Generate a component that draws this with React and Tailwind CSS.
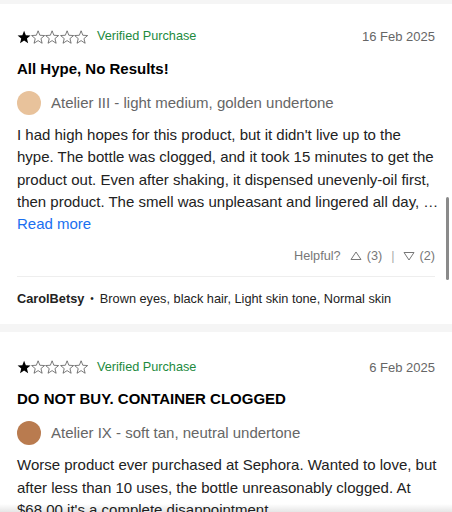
import React from "react";

const reviews = [
  {
    rating: 1,
    date: "16 Feb 2025",
    title: "All Hype, No Results!",
    swatch: "#e8c29b",
    shade: "Atelier III - light medium, golden undertone",
    body: [
      "I had high hopes for this product, but it didn't live up to the",
      "hype. The bottle was clogged, and it took 15 minutes to get the",
      "product out. Even after shaking, it dispensed unevenly-oil first,",
      "then product. The smell was unpleasant and lingered all day, \u2026",
    ],
    readMore: true,
    up: 3,
    down: 2,
    user: "CarolBetsy",
    traits: "Brown eyes, black hair, Light skin tone, Normal skin",
  },
  {
    rating: 1,
    date: "6 Feb 2025",
    title: "DO NOT BUY. CONTAINER CLOGGED",
    swatch: "#b97b4f",
    shade: "Atelier IX - soft tan, neutral undertone",
    body: [
      "Worse product ever purchased at Sephora. Wanted to love, but",
      "after less than 10 uses, the bottle unreasonably clogged. At",
      "$68.00 it's a complete disappointment.",
    ],
  },
];

const STAR = "M7 0.8l1.75 4.45 4.75 0.3-3.65 3.05 1.2 4.65L7 10.6l-4.05 2.65 1.2-4.65L0.5 5.55l4.75-0.3z";

const Stars = ({ rating }) => (
  <span className="flex">
    {[0, 1, 2, 3, 4].map((i) => (
      <svg key={i} width="14.2" height="14" viewBox="0 0 14 14">
        {i < rating ? (
          <path d={STAR} fill="#000" />
        ) : (
          <path d={STAR} fill="none" stroke="#444" strokeWidth="0.7" />
        )}
      </svg>
    ))}
  </span>
);

const Tri = ({ down }) => (
  <svg width="12" height="10" viewBox="0 0 12 10" className="text-[#777]">
    {down ? (
      <path d="M1 1.5h10L6 9z" fill="none" stroke="currentColor" strokeWidth="1" />
    ) : (
      <path d="M1 8.5h10L6 1z" fill="none" stroke="currentColor" strokeWidth="1" />
    )}
  </svg>
);

const ReviewCard = ({ r, top }) => (
  <div className={`bg-white px-[17px] ${top} pb-4`}>
    <div className="flex items-center justify-between h-[18px]">
      <div className="flex items-center gap-[9px]">
        <Stars rating={r.rating} />
        <span className="text-[12.7px] text-[#1d8a3e]">Verified Purchase</span>
      </div>
      <span className="text-[13px] text-[#666]">{r.date}</span>
    </div>
    <h3 className="mt-3 text-[15px] leading-[22px] font-bold text-black">{r.title}</h3>
    <div className="mt-[11px] flex items-center gap-[10px] h-6">
      <span className="w-6 h-6 rounded-full" style={{ background: r.swatch }} />
      <span className="text-[15px] text-[#666]">{r.shade}</span>
    </div>
    <div className="mt-[9px] text-[15px] leading-[22.3px] text-[#222]">
      {r.body.map((l, i) => (
        <div key={i} className="whitespace-nowrap">{l}</div>
      ))}
      {r.readMore && <div className="text-[#1a6ff0]">Read more</div>}
    </div>
    {r.user && (
      <>
        <div className="mt-3 flex items-center justify-end text-[12.7px] leading-[18px] text-[#777]">
          <span className="mr-[9px]">Helpful?</span>
          <Tri />
          <span className="ml-[5px]">({r.up})</span>
          <span className="mx-[9px] text-[#aaa]">|</span>
          <Tri down />
          <span className="ml-[4px]">({r.down})</span>
        </div>
        <div className="mt-[11px] border-t border-[#eeeeee]" />
        <div className="mt-[13px] flex items-center text-[12.75px] leading-[18px] text-[#222]">
          <span className="font-bold">{r.user}</span>
          <span className="mx-[6px] text-[10px]">•</span>
          <span>{r.traits}</span>
        </div>
      </>
    )}
  </div>
);

export default function App() {
  return (
    <div
      className="relative w-[452px] h-[512px] overflow-hidden bg-[#f5f5f5] pt-1"
      style={{ fontFamily: '"Liberation Sans", Arial, sans-serif' }}
    >
      <div className="flex flex-col gap-2">
        <ReviewCard r={reviews[0]} top="pt-6" />
        <ReviewCard r={reviews[1]} top="pt-[26px]" />
      </div>
      <div className="absolute right-[3px] top-[197px] w-[3px] h-[83px] rounded-full bg-[#8a8a8a]" />
      <div className="absolute left-0 right-0 bottom-0 h-[8px] bg-gradient-to-b from-transparent to-black/10" />
    </div>
  );
}
